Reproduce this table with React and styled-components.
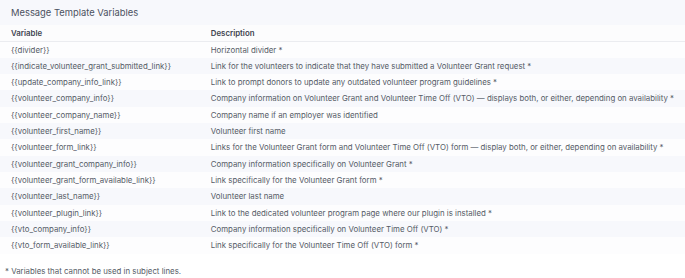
import styled, { createGlobalStyle } from 'styled-components'

const variables = [
  { name: 'divider', desc: 'Horizontal divider *' },
  {
    name: 'indicate_volunteer_grant_submitted_link',
    desc: 'Link for the volunteers to indicate that they have submitted a Volunteer Grant request *',
  },
  {
    name: 'update_company_info_link',
    desc: 'Link to prompt donors to update any outdated volunteer program guidelines *',
  },
  {
    name: 'volunteer_company_info',
    desc: 'Company information on Volunteer Grant and Volunteer Time Off (VTO) — displays both, or either, depending on availability *',
  },
  { name: 'volunteer_company_name', desc: 'Company name if an employer was identified' },
  { name: 'volunteer_first_name', desc: 'Volunteer first name' },
  {
    name: 'volunteer_form_link',
    desc: 'Links for the Volunteer Grant form and Volunteer Time Off (VTO) form — display both, or either, depending on availability *',
  },
  { name: 'volunteer_grant_company_info', desc: 'Company information specifically on Volunteer Grant *' },
  { name: 'volunteer_grant_form_available_link', desc: 'Link specifically for the Volunteer Grant form *' },
  { name: 'volunteer_last_name', desc: 'Volunteer last name' },
  {
    name: 'volunteer_plugin_link',
    desc: 'Link to the dedicated volunteer program page where our plugin is installed *',
  },
  { name: 'vto_company_info', desc: 'Company information specifically on Volunteer Time Off (VTO) *' },
  { name: 'vto_form_available_link', desc: 'Link specifically for the Volunteer Time Off (VTO) form *' },
]

const GlobalStyle = createGlobalStyle`
  body {
    margin: 0;
    background: #ffffff;
    font-family: Inter, 'Noto Sans', sans-serif;
  }
`

const App = () => {
  return (
    <Panel>
      <GlobalStyle />
      <Header>
        <h2>Message Template Variables</h2>
      </Header>
      <Table>
        <thead>
          <tr>
            <th className='variable'>Variable</th>
            <th>Description</th>
          </tr>
        </thead>
        <tbody>
          {variables.map((v) => (
            <tr key={v.name}>
              <td className='variable'>{`{{${v.name}}}`}</td>
              <td>{v.desc}</td>
            </tr>
          ))}
        </tbody>
      </Table>
      <Note>* Variables that cannot be used in subject lines.</Note>
    </Panel>
  )
}

const Panel = styled.div`
  width: 685px;
  background: #ffffff;
`

const Header = styled.div`
  height: 25px;
  display: flex;
  align-items: center;
  padding: 0 11px;
  background: #f7f8fc;
  h2 {
    margin: 0;
    font-size: 9.4px;
    font-weight: 400;
    color: #4b5160;
  }
`

const Table = styled.table`
  width: 100%;
  border-collapse: collapse;
  font-size: 7.85px;
  color: #555b66;
  th,
  td {
    height: 16.33px;
    padding: 0 11px;
    text-align: left;
    white-space: nowrap;
    box-sizing: border-box;
  }
  th {
    font-weight: 600;
    color: #3f4450;
    background: #fcfcfd;
    border-bottom: 1px solid #ebecf0;
  }
  .variable {
    width: 200px;
  }
  tbody tr:nth-child(even) {
    background: #f7f8fc;
  }
  tbody tr:nth-child(odd) {
    background: #fdfdfe;
  }
`

const Note = styled.p`
  margin: 0;
  padding: 12px 5px 0;
  font-size: 7.85px;
  color: #555b66;
`

export default App
